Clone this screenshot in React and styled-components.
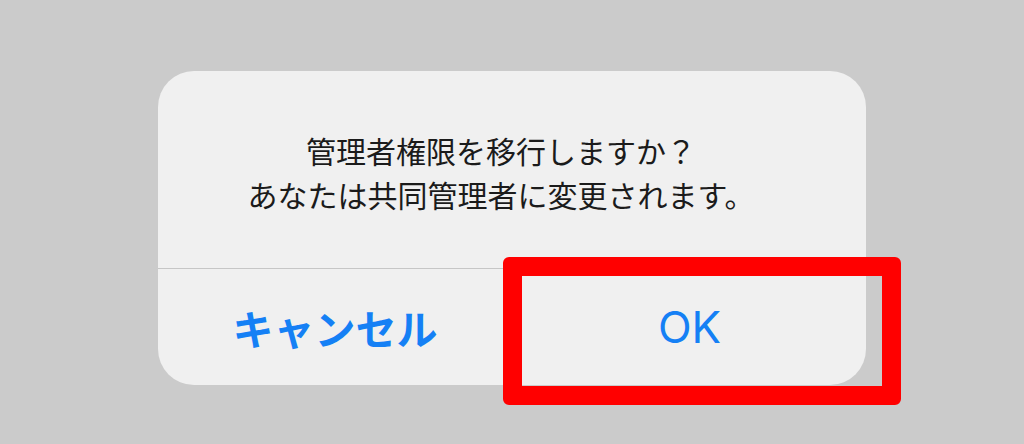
import styled, { createGlobalStyle } from 'styled-components';

const GlobalStyle = createGlobalStyle`
  html, body {
    margin: 0;
    padding: 0;
    background: #cbcbcb;
  }
  body {
    font-family: Inter, 'Noto Sans CJK JP', sans-serif;
  }
`;

const Page = styled.div`
  width: 1024px;
  height: 444px;
  box-sizing: border-box;
  padding: 71px 0 0 158px;
  background: #cbcbcb;
`;

const Dialog = styled.div`
  width: 708px;
  height: 314px;
  background: #f0f0f0;
  border-radius: 36px;
  display: flex;
  flex-direction: column;
`;

const Message = styled.div`
  height: 197px;
  box-sizing: border-box;
  padding: 57px 26px 0 4px;
  text-align: center;
  font-family: 'Noto Sans CJK JP', sans-serif;
  font-size: 30px;
  line-height: 44px;
  color: #1b1b1b;
`;

const Actions = styled.div`
  flex: 1;
  display: grid;
  grid-template-columns: 1fr 1fr;
  border-top: 1px solid #c6c6c6;
`;

const Action = styled.button`
  position: relative;
  border: none;
  background: transparent;
  padding: 0;
  display: flex;
  align-items: center;
  justify-content: center;
  color: #1580f5;
  font-family: ${(p) => (p.$bold ? "'Noto Sans CJK JP', sans-serif" : "Inter, 'Noto Sans CJK JP', sans-serif")};
  font-size: ${(p) => (p.$bold ? '41px' : '44px')};
  font-weight: ${(p) => (p.$bold ? 700 : 400)};
  & + & {
    border-left: 1px solid #c6c6c6;
  }
`;

const Highlight = styled.span`
  position: absolute;
  top: -12px;
  left: -10px;
  width: 398px;
  height: 148px;
  box-sizing: border-box;
  border: 19px solid #ff0000;
  border-radius: 6px;
  pointer-events: none;
`;

export default function App() {
  return (
    <Page>
      <GlobalStyle />
      <Dialog>
        <Message>
          管理者権限を移行しますか？
          <br />
          あなたは共同管理者に変更されます。
        </Message>
        <Actions>
          <Action $bold>キャンセル</Action>
          <Action>
            OK
            <Highlight />
          </Action>
        </Actions>
      </Dialog>
    </Page>
  );
}
